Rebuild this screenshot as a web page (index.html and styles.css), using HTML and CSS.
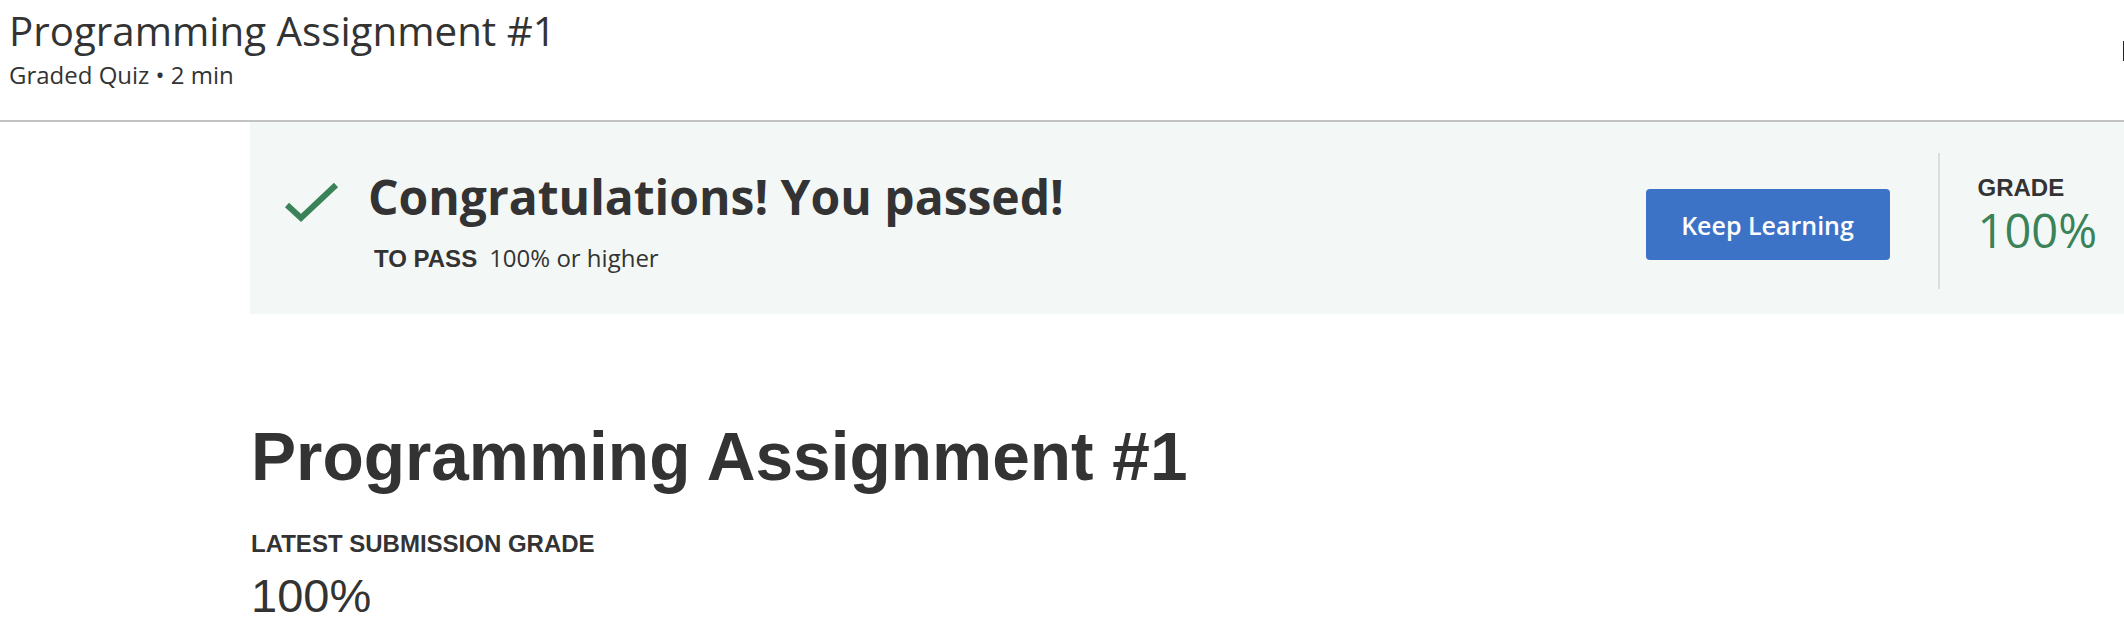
FILE: index.html
```html
<!DOCTYPE html>
<html lang="en">
<head>
<meta charset="utf-8">
<title>Programming Assignment #1</title>
<link rel="stylesheet" href="styles.css">
</head>
<body>
<header class="topbar">
  <div class="topbar-titles">
    <h1 class="topbar-title">Programming Assignment #1</h1>
    <div class="topbar-sub">Graded Quiz • 2 min</div>
  </div>
  <span class="topbar-edge"></span>
</header>
<section class="banner">
  <div class="banner-main">
    <svg class="check" width="56" height="44" viewBox="0 0 56 44" aria-hidden="true">
      <polyline points="4,24 18,37 53,4" fill="none" stroke="#3a8359" stroke-width="6" stroke-linecap="butt" stroke-linejoin="miter"/>
    </svg>
    <div class="banner-text">
      <h2 class="banner-heading">Congratulations! You passed!</h2>
      <div class="banner-pass"><span class="pass-label">TO PASS</span><span class="pass-value">100% or higher</span></div>
    </div>
  </div>
  <button class="btn-primary" type="button">Keep Learning</button>
  <div class="banner-divider"></div>
  <div class="grade">
    <div class="grade-label">GRADE</div>
    <div class="grade-value">100%</div>
  </div>
</section>
<main class="content">
  <h1 class="content-title">Programming Assignment #1</h1>
  <div class="content-label">LATEST SUBMISSION GRADE</div>
  <div class="content-grade">100%</div>
</main>
</body>
</html>
```
FILE: styles.css
```css
html, body {
  margin: 0;
  padding: 0;
}
body {
  background: #ffffff;
  color: #333333;
  font-family: "Open Sans", "Liberation Sans", sans-serif;
  overflow: hidden;
  width: 2124px;
}

.topbar {
  display: flex;
  justify-content: space-between;
  align-items: flex-start;
  height: 122px;
  box-sizing: border-box;
  padding: 4px 0 0 9px;
  border-bottom: 2px solid #c2c2c2;
}
.topbar-title {
  margin: 0;
  font-family: "Open Sans", sans-serif;
  font-weight: 400;
  font-size: 40.3px;
  line-height: 54px;
  color: #333333;
}
.topbar-sub {
  margin-top: 2px;
  font-family: "Open Sans", sans-serif;
  font-size: 24px;
  line-height: 30px;
  color: #333333;
}
.topbar-edge {
  width: 1px;
  height: 20px;
  margin-top: 37px;
  background: #222222;
}

.banner {
  display: flex;
  align-items: center;
  height: 192px;
  box-sizing: border-box;
  margin-left: 250px;
  padding: 0 27px 0 33px;
  background: #f3f8f7;
}
.banner-main {
  flex: 1;
  display: flex;
  align-items: flex-start;
  align-self: flex-start;
  padding-top: 47px;
}
.check {
  display: block;
  margin-top: 12px;
  margin-right: 29px;
  flex: none;
}
.banner-heading {
  margin: 0;
  font-family: "Open Sans", sans-serif;
  font-weight: 700;
  font-size: 48px;
  line-height: 56px;
  color: #333333;
}
.banner-pass {
  margin-top: 18px;
  margin-left: 6px;
  line-height: 30px;
}
.pass-label {
  font-family: "Liberation Sans", Arial, sans-serif;
  font-weight: 700;
  font-size: 24px;
  margin-right: 12px;
}
.pass-value {
  font-family: "Open Sans", sans-serif;
  font-size: 24px;
}

.btn-primary {
  width: 244px;
  height: 71px;
  margin-top: 13px;
  border: none;
  border-radius: 4px;
  background: #3d73c7;
  color: #ffffff;
  font-family: "Open Sans", sans-serif;
  font-weight: 600;
  font-size: 25px;
  padding: 0;
}
.banner-divider {
  width: 2px;
  height: 136px;
  margin: 6px 38px 0 48px;
  background: #dcdedd;
}
.grade {
  align-self: flex-start;
  margin-top: 52px;
}
.grade-label {
  font-family: "Liberation Sans", Arial, sans-serif;
  font-weight: 700;
  font-size: 24px;
  line-height: 28px;
  color: #333333;
}
.grade-value {
  margin-top: 2px;
  font-family: "Open Sans", sans-serif;
  font-weight: 400;
  font-size: 47px;
  line-height: 52px;
  color: #3a8359;
}

.content {
  padding-left: 251px;
  padding-top: 104px;
  font-family: "Liberation Sans", Arial, sans-serif;
}
.content-title {
  margin: 0;
  font-size: 67.6px;
  font-weight: 700;
  line-height: 77px;
  color: #333333;
}
.content-label {
  margin-top: 35px;
  font-size: 24px;
  font-weight: 700;
  line-height: 28px;
  color: #333333;
}
.content-grade {
  margin-top: 12px;
  font-size: 47px;
  font-weight: 400;
  line-height: 52px;
  color: #333333;
}
```
